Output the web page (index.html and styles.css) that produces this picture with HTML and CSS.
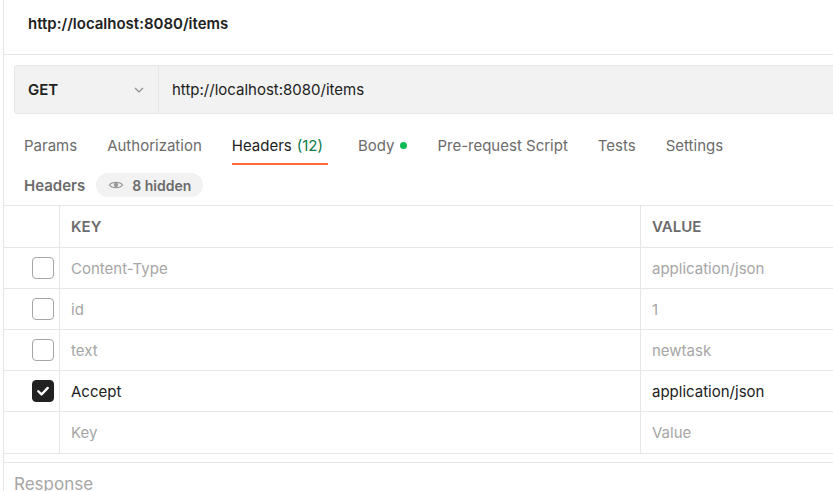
FILE: index.html
```html
<!DOCTYPE html>
<html>
<head>
<meta charset="utf-8">
<link rel="stylesheet" href="styles.css">
</head>
<body>
<div class="pane">
  <div class="titlebar">http://localhost:8080/items</div>
  <div class="urlbar-wrap">
    <div class="urlbar">
      <div class="method">
        <span class="method-name">GET</span>
        <svg class="chev" width="12" height="12" viewBox="0 0 12 12"><path d="M2 4 L6 8 L10 4" fill="none" stroke="#8c8c8c" stroke-width="1.2"/></svg>
      </div>
      <div class="url">http://localhost:8080/items</div>
    </div>
  </div>
  <div class="tabs">
    <div class="tab">Params</div>
    <div class="tab">Authorization</div>
    <div class="tab active">Headers <span class="count">(12)</span></div>
    <div class="tab">Body <span class="dot"></span></div>
    <div class="tab">Pre-request Script</div>
    <div class="tab">Tests</div>
    <div class="tab">Settings</div>
  </div>
  <div class="subhead">
    <span class="subtitle">Headers</span>
    <span class="pill">
      <svg width="16" height="16" viewBox="0 0 16 16"><path d="M1.5 8 C3.5 4.5 12.5 4.5 14.5 8 C12.5 11.5 3.5 11.5 1.5 8 Z" fill="none" stroke="#9a9a9a" stroke-width="1.4"/><circle cx="8" cy="8" r="2.2" fill="#9a9a9a"/></svg>
      8 hidden
    </span>
  </div>
  <div class="table">
    <div class="row head">
      <div class="c1"></div>
      <div class="c2">KEY</div>
      <div class="c3">VALUE</div>
    </div>
    <div class="row muted">
      <div class="c1"><span class="cb"></span></div>
      <div class="c2">Content-Type</div>
      <div class="c3">application/json</div>
    </div>
    <div class="row muted">
      <div class="c1"><span class="cb"></span></div>
      <div class="c2">id</div>
      <div class="c3">1</div>
    </div>
    <div class="row muted">
      <div class="c1"><span class="cb"></span></div>
      <div class="c2">text</div>
      <div class="c3">newtask</div>
    </div>
    <div class="row">
      <div class="c1"><span class="cb checked"><svg width="22" height="22" viewBox="0 0 22 22"><path d="M5.8 11.3 L9.4 14.8 L16.2 7.6" fill="none" stroke="#fff" stroke-width="2.6" stroke-linecap="round" stroke-linejoin="round"/></svg></span></div>
      <div class="c2">Accept</div>
      <div class="c3">application/json</div>
    </div>
    <div class="row muted last">
      <div class="c1"></div>
      <div class="c2">Key</div>
      <div class="c3">Value</div>
    </div>
  </div>
  <div class="response">Response</div>
</div>
</body>
</html>
```
FILE: styles.css
```css
* { box-sizing: border-box; }
html, body { margin: 0; padding: 0; background: #fff; overflow: hidden; }
body { font-family: Inter, "Noto Sans", sans-serif; font-size: 15px; color: #212121; width: 833px; height: 491px; }
.pane { margin-left: 3px; border-left: 1px solid #e6e6e6; height: 491px; overflow: hidden; }
.titlebar { height: 55px; padding: 14px 0 0 24px; line-height: 20px; font-weight: 600; border-bottom: 1px solid #e6e6e6; }
.urlbar-wrap { padding: 10px 0 0 10px; }
.urlbar { display: flex; height: 49px; background: #f2f2f2; border: 1px solid #e6e6e6; border-right: none; border-radius: 4px 0 0 4px; }
.method { width: 144px; flex: none; display: flex; align-items: center; justify-content: space-between; padding: 0 13px 0 13px; border-right: 1px solid #e6e6e6; }
.method-name { font-weight: 600; }
.url { display: flex; align-items: center; padding-left: 13px; }
.tabs { display: flex; gap: 30px; height: 52px; padding: 11px 0 0 20px; }
.tab { height: 40px; color: #6b6b6b; white-space: nowrap; display: flex; align-items: center; }
.tab.active { color: #212121; border-bottom: 2px solid #ff6c37; padding-top: 2px; padding-right: 5px; }
.count { color: #0c7a4b; margin-left: 5px; }
.dot { display: inline-block; width: 7px; height: 7px; border-radius: 50%; background: #0cbb52; margin-left: 6px; }
.subhead { display: flex; align-items: center; height: 39px; padding: 0 0 1px 20px; }
.subtitle { font-weight: 600; color: #6b6b6b; margin-right: 11px; }
.pill { display: inline-flex; align-items: center; gap: 8px; height: 24px; padding: 0 12px; background: #f2f2f2; border-radius: 12px; color: #6b6b6b; font-weight: 600; font-size: 14px; }
.table { border-top: 1px solid #e6e6e6; width: 1100px; }
.row { display: flex; height: 41px; border-bottom: 1px solid #e6e6e6; }
.row.head { height: 42px; }
.row.last { height: 42px; }
.c1 { width: 56px; flex: none; border-right: 1px solid #e6e6e6; display: flex; align-items: center; justify-content: flex-end; padding-right: 5px; }
.c2 { width: 581px; flex: none; border-right: 1px solid #e6e6e6; display: flex; align-items: center; padding-left: 11px; }
.c3 { flex: 1; display: flex; align-items: center; padding-left: 11px; }
.row.head .c2, .row.head .c3 { font-weight: 600; color: #6b6b6b; }
.row.muted .c2, .row.muted .c3 { color: #a6a6a6; }
.cb { width: 22px; height: 22px; border: 1px solid #a6a6a6; border-radius: 4px; display: flex; align-items: center; justify-content: center; }
.cb.checked { background: #212121; border-color: #212121; }
.response { margin-top: 8px; border-top: 1px solid #e6e6e6; padding: 11px 0 0 10px; font-size: 17px; color: #a6a6a6; }
```
